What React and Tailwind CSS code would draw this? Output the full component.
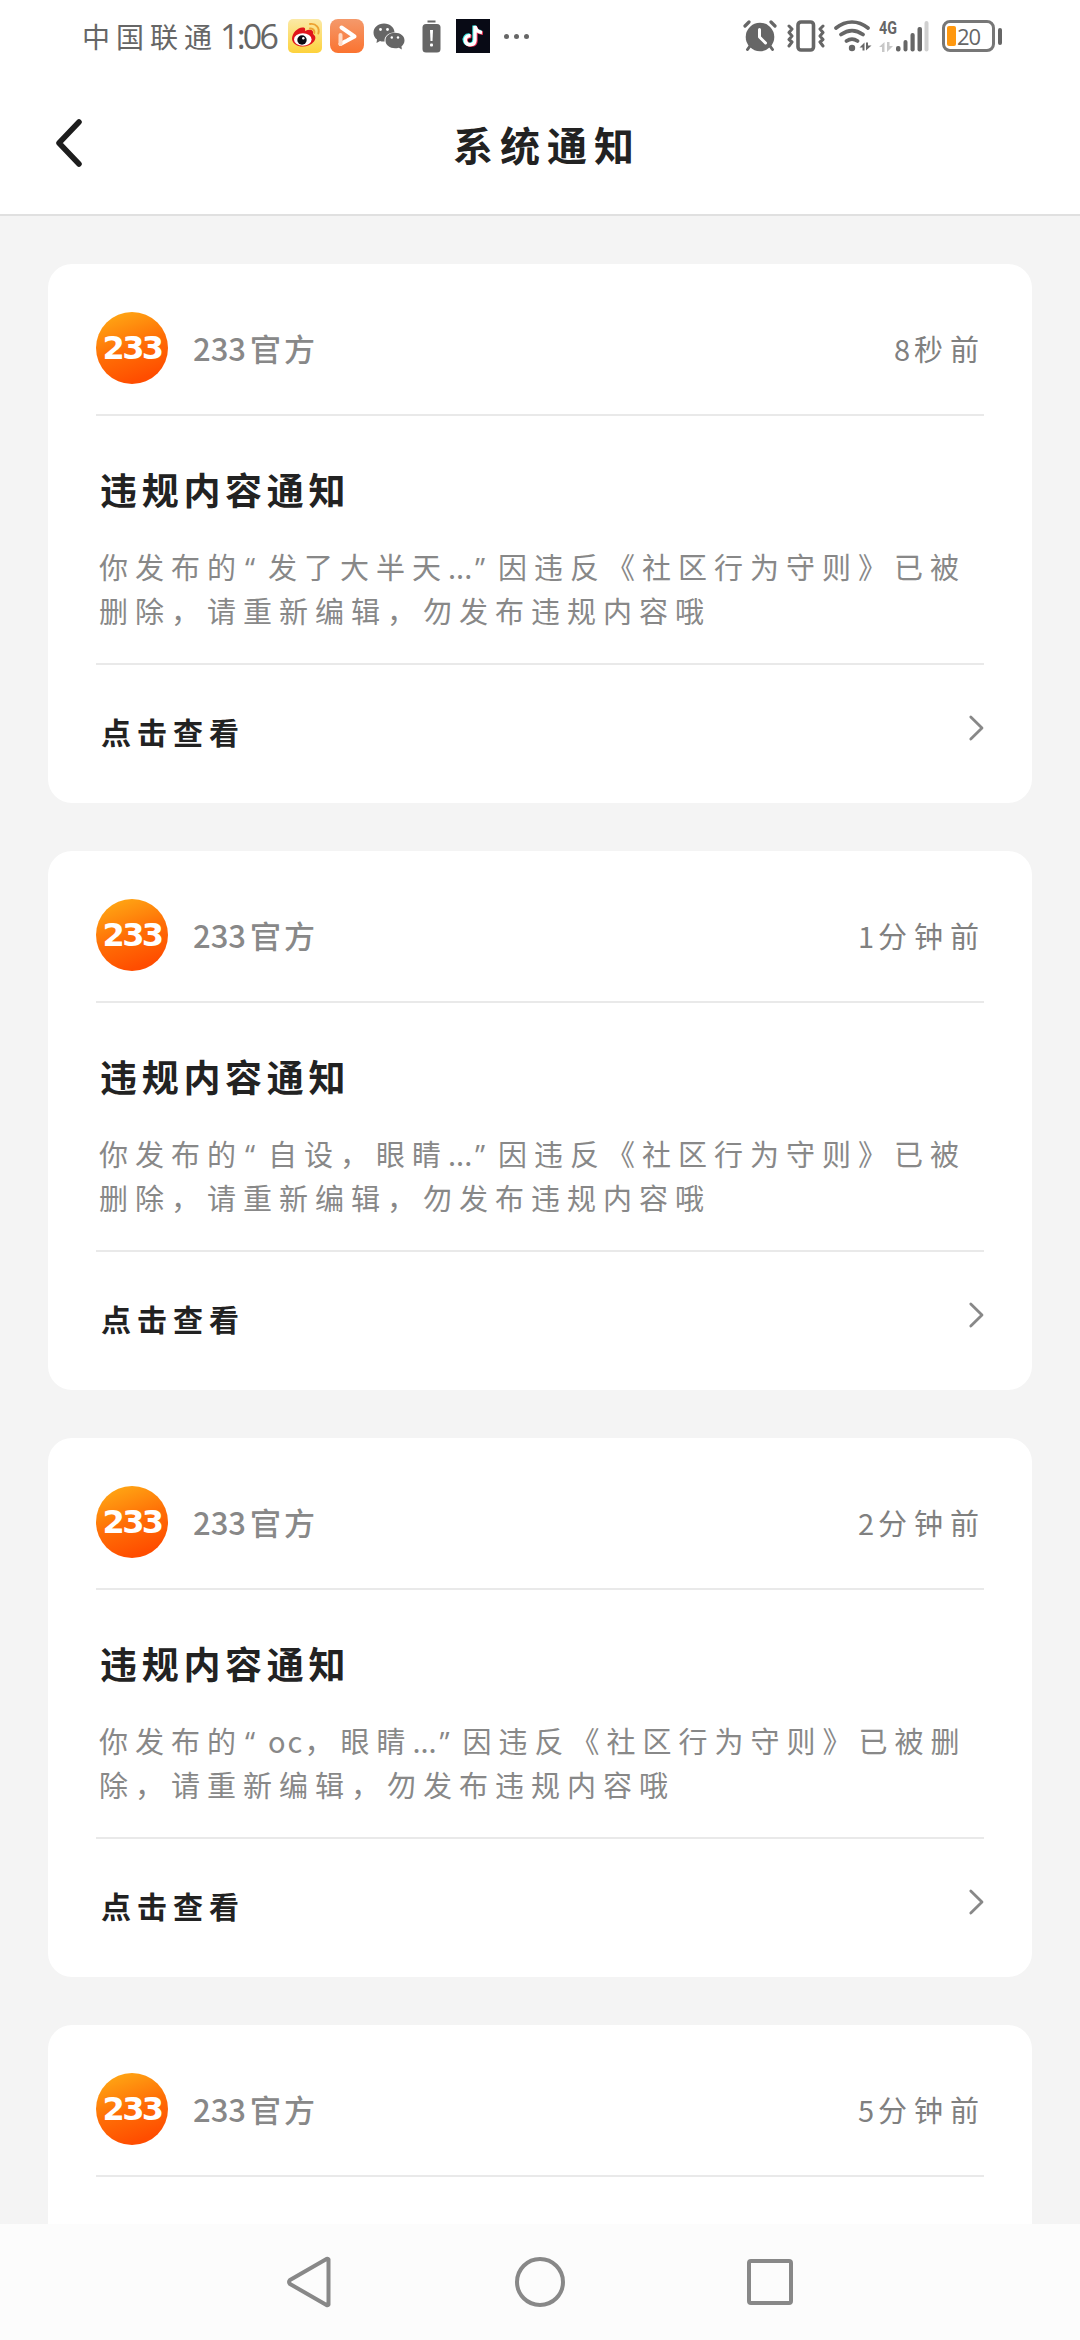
import React from 'react';

const NOTICES = [
  { id: 1, count: '8', unit: '秒前', quoted: '发了大半天' },
  { id: 2, count: '1', unit: '分钟前', quoted: '自设，眼睛' },
  { id: 3, count: '2', unit: '分钟前', latin: 'oc', quoted: '，眼睛' },
  { id: 4, count: '5', unit: '分钟前' },
];

function AppIcons() {
  return (
    <div className="ml-[12px] flex items-center">
      <svg className="w-[34px] h-[34px]" viewBox="0 0 34 34">
        <defs>
          <linearGradient id="weibo" x1="0" y1="0" x2="0" y2="1">
            <stop offset="0" stopColor="#fbe9a6" />
            <stop offset="1" stopColor="#fdd23c" />
          </linearGradient>
        </defs>
        <rect width="34" height="34" rx="5" fill="url(#weibo)" />
        <path d="M4 20C4 14 10 8 15 8.500C18 8.500 17 11 17 12C21 10 26 10 25 15C28 17 28 20 26 22.500C20 30 5 29 4 20Z" fill="#e0151b" />
        <ellipse cx="14.800" cy="20.500" rx="8.800" ry="6.200" fill="#fff" />
        <circle cx="14" cy="21" r="4.700" fill="#0b0b14" />
        <circle cx="15.300" cy="19.200" r="1.200" fill="#fff" />
        <path d="M22 9.500C25 9 27 11.500 26.300 14M22 5C28 4 32 9 30.300 14.500" fill="none" stroke="#eda331" strokeWidth="1.900" strokeLinecap="round" />
      </svg>
      <svg className="ml-2 w-[34px] h-[34px]" viewBox="0 0 34 34">
        <defs>
          <linearGradient id="player" x1="0" y1="0" x2="0" y2="1">
            <stop offset="0" stopColor="#f4996b" />
            <stop offset="1" stopColor="#fb7330" />
          </linearGradient>
        </defs>
        <rect width="34" height="34" rx="8" fill="url(#player)" />
        <path d="M11.500 8.500L24.500 17.500L10.500 25" fill="none" stroke="#fff" strokeWidth="4" strokeLinecap="round" strokeLinejoin="round" />
        <path d="M10.500 25V16" stroke="#ffd9c4" strokeWidth="4" strokeLinecap="round" />
        <path d="M14.500 15.500L18.500 18L15 20.500Z" fill="#f78550" />
      </svg>
      <svg className="ml-[9px] w-8 h-[27px]" viewBox="0 0 32 27">
        <path d="M11 0.500C17 0.500 21.500 4.500 21.500 9.500C16 9 11.500 13 11.500 17.500L11.600 18.500Q9 18.800 7 18L3.500 20L4 16.500C1.800 14.800 0.500 12.500 0.500 9.700C0.500 4.500 5 0.500 11 0.500Z" fill="#666" />
        <path d="M22 9.800C27.500 9.800 31.500 13 31.500 17.500C31.500 20 30.200 22 28.500 23.300L28.800 26.500L25.800 24.700C19 26.500 12.500 23.300 12.500 17.500C12.500 13 16.500 9.800 22 9.800Z" fill="#666" />
        <g fill="#fff">
          <circle cx="7.500" cy="6.500" r="1.400" /><circle cx="14.500" cy="6.500" r="1.400" />
          <circle cx="18.800" cy="14.500" r="1.200" /><circle cx="25" cy="14.500" r="1.200" />
        </g>
      </svg>
      <svg className="ml-[17px] w-[19px] h-[33px]" viewBox="0 0 19 33">
        <rect x="5.500" y="0.500" width="8" height="2" fill="#666" />
        <rect x="0.500" y="4" width="18" height="28.500" rx="3.500" fill="#666" />
        <path d="M8 10H11L10.500 21H8.500Z" fill="#fff" />
        <rect x="8" y="23.500" width="3" height="3" rx="1" fill="#fff" />
      </svg>
      <svg className="ml-[15px] w-[34px] h-[34px]" viewBox="0 0 34 34">
        <rect width="34" height="34" fill="#080a15" />
        <g fill="none" strokeWidth="3.400">
          <path d="M13.500 16C9.500 15.500 7.500 19 8.500 22C10.500 27 18 26 18 20.500V6.500C18.500 10.500 21.500 12.500 25 12.800" stroke="#35e5e2" />
          <path d="M15.500 17.500C11.500 17 9.500 20 10.500 23C12.500 28 20 27 20 21.500V8C20.500 12 23.500 14 27 14.300" stroke="#ef3155" />
          <path d="M14.500 16.800C10.500 16.300 8.500 19.500 9.500 22.500C11.500 27.500 19 26.500 19 21V7C19.500 11 22.500 13 26 13.500" stroke="#fff" />
        </g>
      </svg>
      <div className="ml-[14px] flex gap-[5px]">
        <span className="size-[5px] rounded-full bg-[#666]" />
        <span className="size-[5px] rounded-full bg-[#666]" />
        <span className="size-[5px] rounded-full bg-[#666]" />
      </div>
    </div>
  );
}

function SystemIcons() {
  return (
    <div className="flex items-center">
      <svg className="w-[34px] h-8" viewBox="0 0 34 32" fill="none" stroke="#666" strokeLinecap="round">
        <circle cx="17" cy="17" r="14.300" fill="#666" stroke="none" />
        <path d="M2 6L6 2M28 2L32 6" strokeWidth="3.200" />
        <path d="M7 26L4.500 29.500M27 26L29.500 29.500" strokeWidth="3" />
        <path d="M16.500 9.500V17L22.500 23" stroke="#fff" strokeWidth="3" strokeLinejoin="round" />
      </svg>
      <svg className="ml-[10px] w-[38px] h-8" viewBox="0 0 38 32" fill="none" stroke="#666">
        <rect x="11" y="2" width="15.500" height="28" rx="3" strokeWidth="3.600" />
        <path d="M2 6L5 9L2 12.500L5 16L2 19.500L5 22L2 26M36 6L33 9L36 12.500L33 16L36 19.500L33 22L36 26" strokeWidth="3" strokeLinecap="round" strokeLinejoin="round" />
      </svg>
      <svg className="ml-[9px] w-[38px] h-8" viewBox="0 0 38 32" fill="none" stroke="#666" strokeWidth="3.700" strokeLinecap="round">
        <path d="M2 8C12 0 24 0 34 8M7 14.500C14 9.500 22 9.500 29 14.500M12.500 21C16 18.500 20 18.500 23.500 21" />
        <circle cx="18" cy="28" r="3.200" fill="#666" stroke="none" />
        <path d="M25.500 27.500L30.500 22.500V30.500H28.500V27.500ZM32 22.500V30.500L37.500 25.500H34V22.500Z" fill="#666" stroke="none" />
      </svg>
      <div className="ml-[7px] flex h-8 items-end">
        <div className="flex h-8 w-[17px] flex-col justify-between">
          <span className="origin-left scale-x-75 font-['Roboto',sans-serif] text-[19px] leading-[15px] font-bold text-[#666]">4G</span>
          <svg className="w-[15px] h-[10px]" viewBox="0 0 15 10" fill="#c8c8c8">
            <path d="M0 5L5.500 0V10H3V5ZM8 0V10L14 4H10.500V0Z" />
          </svg>
        </div>
        <svg className="w-[34px] h-8" viewBox="0 0 34 32" fill="#666">
          <rect x="0" y="26" width="4.500" height="5.500" rx="2" />
          <rect x="7.500" y="20" width="4" height="11.500" rx="2" />
          <rect x="14.500" y="13" width="4.200" height="18.500" rx="2" />
          <rect x="21.500" y="7" width="4.500" height="24.500" rx="2" />
          <rect x="28.500" y="1" width="4" height="30.500" rx="2" fill="#d0d0d0" />
        </svg>
      </div>
      <div className="ml-[12px] flex h-8 w-[53px] items-center rounded-[8px] border-[3px] border-[#777] pl-[2px]">
        <span className="h-[20px] w-[9px] rounded-[2px] bg-[#ff980f]" />
        <span className="ml-px font-['Open_Sans',sans-serif] text-[22px] leading-[24px] tracking-[-1px] text-[#666]">20</span>
      </div>
      <span className="ml-[3px] h-[17px] w-1 rounded-[2px] bg-[#666]" />
    </div>
  );
}

function StatusBar() {
  return (
    <div className="flex h-[72px] shrink-0 items-center justify-between bg-white pr-[78px] pl-[82px] text-[#666]">
      <div className="flex items-center">
        <span className="text-[28px] tracking-[6px]">中国联通</span>
        <span className="ml-[2px] font-['Open_Sans',sans-serif] text-[34px] leading-[40px] tracking-[-2.8px]">1:06</span>
        <AppIcons />
      </div>
      <SystemIcons />
    </div>
  );
}

function Header() {
  return (
    <header className="grid h-36 shrink-0 grid-cols-[100px_1fr_100px] items-center border-b-2 border-[#e0e0e0] bg-white">
      <svg className="ml-[54px] w-[30px] h-12" viewBox="0 0 30 48">
        <path d="M25 3L5 24L25 45" fill="none" stroke="#1d1d1d" strokeWidth="5.500" strokeLinecap="round" strokeLinejoin="round" />
      </svg>
      <h1 className="pt-[2px] pl-[14px] text-center text-[40px] leading-[48px] font-bold tracking-[7px] text-[#222]">系统通知</h1>
    </header>
  );
}

function NoticeCard({ notice }) {
  return (
    <article className="h-[539px] shrink-0 rounded-[24px] bg-white px-12">
      <div className="flex h-[152px] items-center border-b-2 border-[#e9e9e9] pt-[18px]">
        <div className="flex size-[72px] items-center justify-center rounded-full bg-linear-160 from-[#ffa313] from-10% via-[#ff6d06] via-50% to-[#ff4d00] to-85%">
          <span className="font-['DejaVu_Sans',sans-serif] text-[32px] font-bold tracking-[-2.6px] text-white">233</span>
        </div>
        <div className="ml-[25px] flex items-center text-[31px] font-medium text-[#888]">
          <span>233</span>
          <span className="ml-[4px] tracking-[3px]">官方</span>
        </div>
        <div className="ml-auto flex items-center pt-px text-[29px] text-[#808080]">
          <span>{notice.count}</span>
          <span className="ml-[4px] -mr-[2px] tracking-[7px]">{notice.unit}</span>
        </div>
      </div>

      {notice.quoted && (
        <>
          <div className="h-[249px] border-b-2 border-[#e9e9e9] pt-[45px]">
            <h2 className="pl-[4px] text-[37px] leading-[56px] font-bold tracking-[4.7px] text-[#222]">违规内容通知</h2>
            <p className="mt-[28px] pl-[3px] text-[29px] leading-[42px] tracking-[7px] text-[#888]">
              你发布的
              <span className="inline-block w-[25px] pl-[2px] font-['Open_Sans',sans-serif] tracking-normal">“</span>
              {notice.latin && <span className="tracking-[2px]">{notice.latin}</span>}
              {notice.quoted}
              <span className="inline-block w-[27px] tracking-normal">...</span>
              <span className="inline-block w-[23px] font-['Open_Sans',sans-serif] tracking-normal">”</span>
              因违反《社区行为守则》已被删除，请重新编辑，勿发布违规内容哦
            </p>
          </div>

          <div className="flex h-[132px] items-center justify-between">
            <span className="pl-[5px] text-[30px] font-bold tracking-[6px] text-[#222]">点击查看</span>
            <svg className="mb-[6px] w-4 h-7" viewBox="0 0 16 28">
              <path d="M2.800 3L14 14L2.800 25" fill="none" stroke="#888" strokeWidth="2.800" strokeLinecap="round" strokeLinejoin="round" />
            </svg>
          </div>
        </>
      )}
    </article>
  );
}

function NavBar() {
  return (
    <nav className="flex h-[116px] shrink-0 items-center justify-between bg-[#fcfcfc] pr-[287px] pl-[286px]">
      <svg className="w-[46px] h-[52px]" viewBox="0 0 46 52" fill="none" stroke="#888" strokeWidth="4" strokeLinejoin="round">
        <path d="M42.500 3.500V48.500Q42 49.500 40.500 49L4 28Q2 26 4 24L40.500 3Q42 2.500 42.500 3.500Z" />
      </svg>
      <span className="size-[50px] rounded-full border-[4px] border-[#888]" />
      <span className="h-[46px] w-[46px] rounded-[4px] border-[4px] border-[#888]" />
    </nav>
  );
}

export default function App() {
  return (
    <div lang="zh-CN" className="flex h-[2340px] w-[1080px] flex-col overflow-hidden bg-[#f4f4f4] font-['Noto_Sans_CJK_SC',sans-serif]">
      <StatusBar />
      <Header />
      <main className="flex min-h-0 flex-1 flex-col gap-12 overflow-hidden px-12 pt-12">
        {NOTICES.map((n) => <NoticeCard key={n.id} notice={n} />)}
      </main>
      <NavBar />
    </div>
  );
}
